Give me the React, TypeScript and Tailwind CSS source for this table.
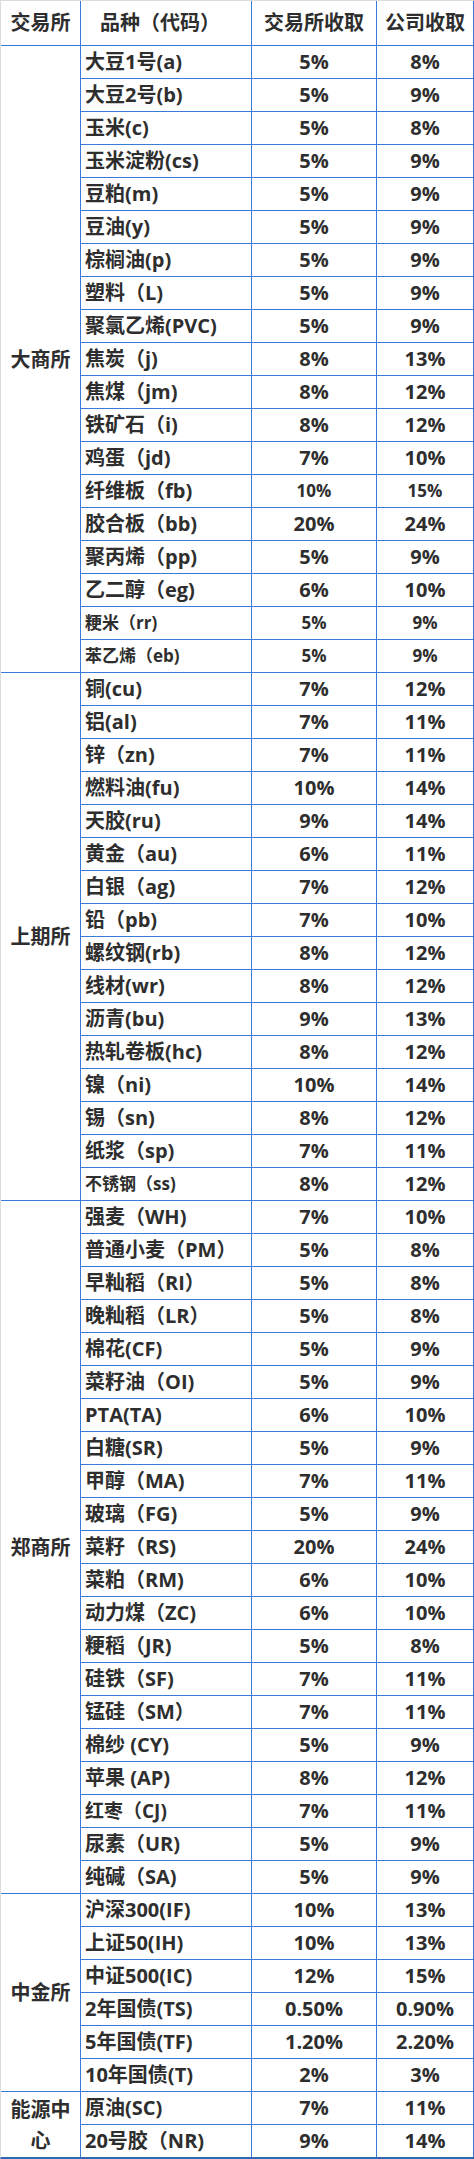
import React from 'react';

type Row = { name: string; ex: string; co: string; nameSize?: string; valSize?: string };
type Section = { label: string; span: string; rows: Row[] };

const sections: Section[] = [
  {
    label: '大商所',
    span: 'row-span-[19]',
    rows: [
      { name: '大豆1号(a)', ex: '5%', co: '8%' },
      { name: '大豆2号(b)', ex: '5%', co: '9%' },
      { name: '玉米(c)', ex: '5%', co: '8%' },
      { name: '玉米淀粉(cs)', ex: '5%', co: '9%' },
      { name: '豆粕(m)', ex: '5%', co: '9%' },
      { name: '豆油(y)', ex: '5%', co: '9%' },
      { name: '棕榈油(p)', ex: '5%', co: '9%' },
      { name: '塑料（L)', ex: '5%', co: '9%' },
      { name: '聚氯乙烯(PVC)', ex: '5%', co: '9%' },
      { name: '焦炭（j)', ex: '8%', co: '13%' },
      { name: '焦煤（jm)', ex: '8%', co: '12%' },
      { name: '铁矿石（i)', ex: '8%', co: '12%' },
      { name: '鸡蛋（jd)', ex: '7%', co: '10%' },
      { name: '纤维板（fb)', ex: '10%', co: '15%', valSize: 'text-[17px]' },
      { name: '胶合板（bb)', ex: '20%', co: '24%' },
      { name: '聚丙烯（pp)', ex: '5%', co: '9%' },
      { name: '乙二醇（eg)', ex: '6%', co: '10%' },
      { name: '粳米（rr)', ex: '5%', co: '9%', nameSize: 'text-[17px]', valSize: 'text-[17px]' },
      { name: '苯乙烯（eb)', ex: '5%', co: '9%', nameSize: 'text-[17px]', valSize: 'text-[17px]' },
    ],
  },
  {
    label: '上期所',
    span: 'row-span-[16]',
    rows: [
      { name: '铜(cu)', ex: '7%', co: '12%' },
      { name: '铝(al)', ex: '7%', co: '11%' },
      { name: '锌（zn)', ex: '7%', co: '11%' },
      { name: '燃料油(fu)', ex: '10%', co: '14%' },
      { name: '天胶(ru)', ex: '9%', co: '14%' },
      { name: '黄金（au)', ex: '6%', co: '11%' },
      { name: '白银（ag)', ex: '7%', co: '12%' },
      { name: '铅（pb)', ex: '7%', co: '10%' },
      { name: '螺纹钢(rb)', ex: '8%', co: '12%' },
      { name: '线材(wr)', ex: '8%', co: '12%' },
      { name: '沥青(bu)', ex: '9%', co: '13%' },
      { name: '热轧卷板(hc)', ex: '8%', co: '12%' },
      { name: '镍（ni)', ex: '10%', co: '14%' },
      { name: '锡（sn)', ex: '8%', co: '12%' },
      { name: '纸浆（sp)', ex: '7%', co: '11%' },
      { name: '不锈钢（ss)', ex: '8%', co: '12%', nameSize: 'text-[17px]' },
    ],
  },
  {
    label: '郑商所',
    span: 'row-span-[21]',
    rows: [
      { name: '强麦（WH)', ex: '7%', co: '10%' },
      { name: '普通小麦（PM）', ex: '5%', co: '8%' },
      { name: '早籼稻（RI）', ex: '5%', co: '8%' },
      { name: '晚籼稻（LR）', ex: '5%', co: '8%' },
      { name: '棉花(CF)', ex: '5%', co: '9%' },
      { name: '菜籽油（OI)', ex: '5%', co: '9%' },
      { name: 'PTA(TA)', ex: '6%', co: '10%' },
      { name: '白糖(SR)', ex: '5%', co: '9%' },
      { name: '甲醇（MA)', ex: '7%', co: '11%' },
      { name: '玻璃（FG)', ex: '5%', co: '9%' },
      { name: '菜籽（RS)', ex: '20%', co: '24%' },
      { name: '菜粕（RM)', ex: '6%', co: '10%' },
      { name: '动力煤（ZC)', ex: '6%', co: '10%' },
      { name: '粳稻（JR)', ex: '5%', co: '8%' },
      { name: '硅铁（SF)', ex: '7%', co: '11%' },
      { name: '锰硅（SM）', ex: '7%', co: '11%' },
      { name: '棉纱 (CY)', ex: '5%', co: '9%' },
      { name: '苹果 (AP)', ex: '8%', co: '12%' },
      { name: '红枣（CJ)', ex: '7%', co: '11%', nameSize: 'text-[19px]' },
      { name: '尿素（UR)', ex: '5%', co: '9%' },
      { name: '纯碱（SA)', ex: '5%', co: '9%' },
    ],
  },
  {
    label: '中金所',
    span: 'row-span-[6]',
    rows: [
      { name: '沪深300(IF)', ex: '10%', co: '13%' },
      { name: '上证50(IH)', ex: '10%', co: '13%' },
      { name: '中证500(IC)', ex: '12%', co: '15%' },
      { name: '2年国债(TS)', ex: '0.50%', co: '0.90%' },
      { name: '5年国债(TF)', ex: '1.20%', co: '2.20%' },
      { name: '10年国债(T)', ex: '2%', co: '3%' },
    ],
  },
  {
    label: '能源中心',
    span: 'row-span-[2]',
    rows: [
      { name: '原油(SC)', ex: '7%', co: '11%' },
      { name: '20号胶（NR)', ex: '9%', co: '14%' },
    ],
  },
];

const App = () => {
  return (
    <div className="w-[474px] bg-white font-['Open_Sans','Noto_Sans_CJK_SC',sans-serif] font-bold text-[#2e2e2e]">
      <div className="grid grid-cols-[79px_170px_124px_96px] grid-rows-[44px] auto-rows-[32px] gap-px bg-[#3a7ad8] pr-px border-l border-t border-[#dcdcdc] border-b-2 border-b-[#2b6aae]">
        {/** Header */}
        <div className="bg-white flex items-center justify-center text-[20px]">交易所</div>
        <div className="bg-white flex items-center justify-center pr-3 text-[20px]">品种（代码）</div>
        <div className="bg-white flex items-center justify-center text-[20px]">交易所收取</div>
        <div className="bg-white flex items-center justify-center text-[20px]">公司收取</div>

        {/** Body */}
        {sections.map((section) => (
          <React.Fragment key={section.label}>
            <div
              className={`${section.span} col-start-1 bg-white flex items-center justify-center px-px text-center text-[20px] leading-[31px]`}
            >
              {section.label}
            </div>
            {section.rows.map((row, index) => (
              <React.Fragment key={`${row.name}${index}`}>
                <div
                  className={`col-start-2 bg-white flex items-center pl-1 whitespace-nowrap ${row.nameSize ?? 'text-[20px]'}`}
                >
                  {row.name}
                </div>
                <div
                  className={`bg-white flex items-center justify-center ${row.valSize ?? 'text-[20px]'}`}
                >
                  {row.ex}
                </div>
                <div
                  className={`bg-white flex items-center justify-center ${row.valSize ?? 'text-[20px]'}`}
                >
                  {row.co}
                </div>
              </React.Fragment>
            ))}
          </React.Fragment>
        ))}
      </div>
    </div>
  );
};

export default App;
